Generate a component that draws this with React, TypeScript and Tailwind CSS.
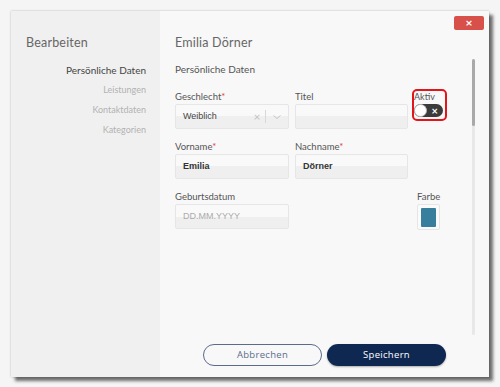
import { ReactNode } from 'react';

type FieldProps = {
  label: string,
  required?: boolean,
  children: ReactNode,
};

function Field({ label, required, children }: FieldProps) {
  return (
    <div className="flex flex-col">
      <label className="text-[9.5px] leading-[12px] text-[#555] h-[13px]">
        {label}
        {required && <span className="text-[#e0443c]">*</span>}
      </label>
      {children}
    </div>
  );
}

function TextBox({ value, placeholder }: { value?: string, placeholder?: string }) {
  return (
    <div className="h-[25px] flex items-center px-[7px] border border-[#e6e6e6] rounded-[2px] bg-[linear-gradient(#f9f9f9_50%,#efefef_50%)] font-['Liberation_Sans',sans-serif] text-[9px]">
      {value ? (
        <span className="font-bold text-[#333]">{value}</span>
      ) : (
        <span className="text-[#ababab]">{placeholder}</span>
      )}
    </div>
  );
}

export default function App() {
  const navItems = ['Leistungen', 'Kontaktdaten', 'Kategorien'];

  return (
    <div className="w-[500px] h-[387px] bg-[#f5f5f5] pt-[11px] pl-[11px] font-['Lato',sans-serif]">
      <div className="w-[478px] h-[366px] flex shadow-[0_0_2px_rgba(0,0,0,0.25),4px_4px_3px_rgba(0,0,0,0.55)]">
        {/* Sidebar */}
        <aside className="w-[149px] bg-[#f0f0f0] pt-[22px]">
          <h2 className="pl-[15px] text-[12.5px] leading-[20px] text-[#666] tracking-[0.2px]">Bearbeiten</h2>
          <nav className="mt-[7px] pr-[14px] flex flex-col items-end">
            <span className="text-[10px] leading-[20px] text-[#444]">Persönliche Daten</span>
            {navItems.map((item) => (
              <span key={item} className="text-[9px] leading-[20px] text-[#b2b2b2]">{item}</span>
            ))}
          </nav>
        </aside>

        {/* Main */}
        <main className="relative flex-1 bg-[#f8f8f8] pt-[22px] pb-[11px] flex flex-col">
          <button className="absolute top-[5px] right-[5px] w-[30px] h-[14px] rounded-[2px] bg-[#d7514a] flex items-center justify-center text-white text-[12px] font-bold leading-none">
            ×
          </button>

          <h1 className="pl-[15px] text-[12.5px] leading-[20px] text-[#666] tracking-[0.2px]">Emilia Dörner</h1>

          <div className="mt-[6px] flex pr-[14px] h-[277px]">
            <div className="flex-1 pl-[15px] pt-[2px]">
              <h3 className="text-[10px] leading-[16px] text-[#555]">Persönliche Daten</h3>

              <div className="mt-[14px] grid grid-cols-[114px_113px_40px] gap-x-[6px] gap-y-[12px] items-start">
                <Field label="Geschlecht" required>
                  <div className="h-[25px] flex items-center border border-[#e6e6e6] rounded-[2px] bg-[linear-gradient(#f9f9f9_50%,#efefef_50%)]">
                    <span className="flex-1 pl-[7px] font-['Liberation_Sans',sans-serif] text-[9px] text-[#444]">Weiblich</span>
                    <span className="w-[16px] text-center text-[12px] text-[#c4c4c4]">×</span>
                    <span className="w-px h-[13px] bg-[#d8d8d8]" />
                    <svg width="22" height="10" viewBox="0 0 22 10" className="text-[#c4c4c4]">
                      <path d="M7.5 3.5 L11 6.5 L14.5 3.5" fill="none" stroke="currentColor" strokeWidth="1" />
                    </svg>
                  </div>
                </Field>

                <Field label="Titel">
                  <TextBox />
                </Field>

                <div className="rounded-[3px] outline-2 outline-solid outline-[#e3141b] w-[31px] pb-[2px]">
                  <label className="block text-[9px] leading-[12px] text-[#555] h-[13px]">Aktiv</label>
                  <div className="relative w-[29px] h-[13px] rounded-full bg-[#3b3b3b] flex items-center justify-end pr-[5px]">
                    <span className="absolute left-0 top-0 w-[13px] h-[13px] rounded-full bg-white border border-[#bdbdbd]" />
                    <span className="text-white text-[11px] font-bold leading-none">×</span>
                  </div>
                </div>

                <Field label="Vorname" required>
                  <TextBox value="Emilia" />
                </Field>

                <Field label="Nachname" required>
                  <TextBox value="Dörner" />
                </Field>

                <div />

                <Field label="Geburtsdatum">
                  <TextBox placeholder="DD.MM.YYYY" />
                </Field>

                <div />

                <div className="pl-[3px] flex flex-col">
                  <label className="text-[9.5px] leading-[12px] text-[#555] h-[13px]">Farbe</label>
                  <div className="w-[23px] h-[26px] border border-[#e6e6e6] rounded-[2px] bg-[#fafafa] flex items-center justify-center">
                    <span className="w-[15px] h-[19px] rounded-[1px] bg-[#377f9c]" />
                  </div>
                </div>
              </div>
            </div>

            {/* Scrollbar */}
            <div className="w-[3px] h-full bg-[#e8e8e8] rounded-full">
              <div className="h-[67px] bg-[#a9a9a9] rounded-full" />
            </div>
          </div>

          <div className="mt-[9px] flex justify-center gap-[5px] font-['Open_Sans',sans-serif]">
            <button className="w-[119px] h-[22px] rounded-full border border-[#5b6b8c] text-[#5b6b8c] text-[9.5px] tracking-[0.3px]">
              Abbrechen
            </button>
            <button className="w-[119px] h-[22px] rounded-full bg-[#0f2852] text-white text-[9.5px] tracking-[0.3px] shadow-[0_1px_2px_rgba(0,0,0,0.3)]">
              Speichern
            </button>
          </div>
        </main>
      </div>
    </div>
  );
}
